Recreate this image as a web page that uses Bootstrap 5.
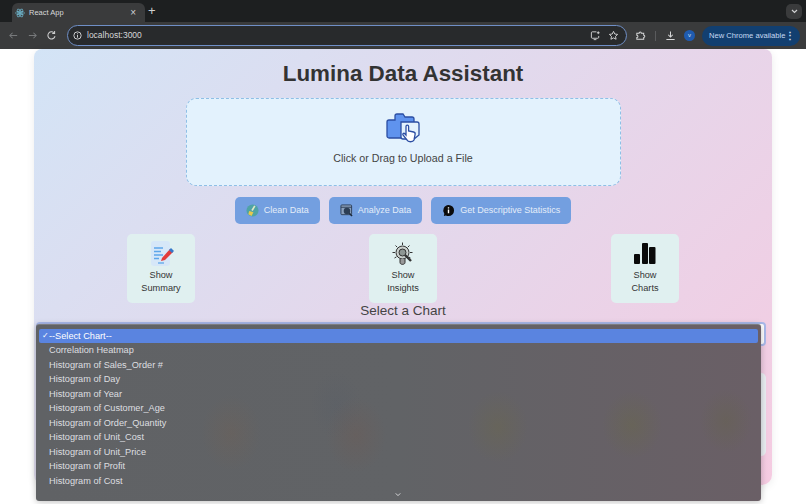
<!DOCTYPE html>
<html lang="en">
<head>
  <meta charset="UTF-8" />
  <meta name="viewport" content="width=device-width, initial-scale=1.0"/>
  <title>React App</title>
  <link href="https://cdn.jsdelivr.net/npm/bootstrap@5.3.0/dist/css/bootstrap.min.css" rel="stylesheet">
  <style>
    html, body { height: 504px; overflow: hidden; }
    body { background: #fff; font-family: "Liberation Sans", Arial, sans-serif; position: relative; }

    /* browser chrome */
    .tab-strip { height: 22px; background: #1d1f20; padding-left: 12px; padding-right: 4px; }
    .chrome-tab { width: 133px; height: 19px; margin-top: 3px; background: #3a3b3c; border-radius: 6px 6px 0 0; color: #d8d9da; font-size: 7.5px; padding: 0 9px 0 3px; }
    .tab-favicon { width: 10px; height: 10px; margin: 0 4px 0 0; }
    .tab-close, .tab-new { color: #d0d1d2; line-height: 1; }
    .tab-close { font-size: 10px; }
    .tab-new { font-size: 13px; margin-left: 3px; }
    .tab-menu { width: 16px; height: 15px; background: #3a3b3c; border-radius: 5px; }
    .tool-bar { height: 27px; background: #3a3b3c; padding: 0 4px 0 8px; }
    .tool-ico { width: 11px; height: 11px; flex: none; }
    .url-box { width: 560px; height: 21px; margin-left: 10px; background: #282a2c; border: 1.3px solid #6f8fc7; border-radius: 11px; padding: 0 7px 0 4px; color: #d6d7d8; font-size: 8.5px; }
    .cast-ico { margin-right: 7px; }
    .bar-sep { width: 1px; height: 10px; background: #5a5b5d; margin: 0 9px; }
    .avatar-dot { width: 11px; height: 11px; margin: 0 7px 0 8px; border-radius: 50%; background: #1f5bb0; color: #d7e4f7; font-size: 6px; line-height: 11px; text-align: center; }
    .update-pill { width: 98px; height: 20px; background: #123f70; border-radius: 10px; color: #c6daf3; font-size: 7.6px; padding: 0 5px 0 7px; white-space: nowrap; }
    .pill-dots { font-size: 10px; font-weight: 700; line-height: 1; }

    /* app */
    .app-panel { width: 738px; height: 436px; margin-left: 34px; padding: 6px 6px 0; border-radius: 8px 8px 10px 10px; background: linear-gradient(135deg, #d3e4f6, #f5cbe1); box-shadow: 0 2px 8px rgba(0,0,0,.08); }
    .app-title { font-size: 22.4px; font-weight: 700; color: #333; margin: 5px 0 0; line-height: 28px; height: 33px; text-align: center; }
    .drop-zone { width: 435px; height: 88px; margin: 5px auto 0; padding-bottom: 5px; background: #e3f2fd; border: 1px dashed #8fbfe6; border-radius: 10px; color: #444; font-size: 10.7px; }
    .drop-ico { width: 34px; height: 30px; margin-bottom: 7px; }
    .action-row { margin-top: 11px; gap: 9px; }
    .action-btn { height: 27px; padding: 0 11px; background: #739fe0; border: 0; border-radius: 5px; color: #e4edf9; font-size: 9px; }
    .action-btn:hover { background: #739fe0; color: #e4edf9; }
    .action-ico { width: 13px; height: 13px; margin-right: 5px; }
    .tile-row { margin-top: 10px; }
    .show-tile { width: 68px; height: 69px; padding: 7px 2px 0; background: #e0f0f0; border-radius: 5px; color: #333; font-size: 9.2px; line-height: 13.4px; text-align: center; }
    .tile-ico { width: 26px; height: 26px; margin-bottom: 2px; }
    .chart-label { font-size: 13.5px; color: #444; line-height: 16px; margin: 0; text-align: center; height: 19px; }
    .chart-select { height: 24px; width: 730px; margin-left: -4px; background-color: #fff; border: 2px solid #a9b9ea; border-radius: 4px; padding: 0; }
    .below-card { height: 83px; margin-top: 27px; background: #e9edf1; border-radius: 5px; }

    /* native select popup */
    .select-popup { position: absolute; left: 36px; top: 324px; width: 725px; height: 177px; padding: 3.500px 3px 0; border-radius: 3px; border-top: 1px solid #7d7d80; color: #dedfe0; font-size: 9.2px; box-shadow: 0 1px 6px rgba(0,0,0,.25);
      background:
        radial-gradient(ellipse 30px 38px at 195px 108px, rgba(125,95,70,.2), transparent),
        radial-gradient(ellipse 30px 38px at 320px 110px, rgba(120,85,70,.22), transparent),
        radial-gradient(ellipse 26px 34px at 300px 80px, rgba(80,90,105,.18), transparent),
        radial-gradient(ellipse 30px 36px at 462px 102px, rgba(110,105,65,.3), transparent),
        radial-gradient(ellipse 30px 34px at 596px 100px, rgba(105,105,65,.35), transparent),
        radial-gradient(ellipse 26px 32px at 690px 96px, rgba(100,100,65,.3), transparent),
        linear-gradient(90deg, #606265, #616366 50%, #6a5f66);
    }
    .popup-opt { height: 14.55px; line-height: 14.55px; padding-left: 10px; position: relative; white-space: nowrap; }
    .popup-opt.is-current { background: #5a84e0; border-radius: 2px; color: #fff; }
    .popup-tick { position: absolute; left: 3px; font-size: 8px; }
    .popup-more { position: absolute; left: 359px; bottom: 4px; width: 6px; height: 5px; }
  </style>
</head>
<body>
  <div class="tab-strip d-flex align-items-start">
    <div class="chrome-tab d-flex align-items-center">
      <svg class="tab-favicon" viewBox="0 0 20 20" fill="none" stroke="#6fb7cf" stroke-width="1.4"><circle cx="10" cy="10" r="2" fill="#6fb7cf"/><ellipse cx="10" cy="10" rx="9" ry="3.6"/><ellipse cx="10" cy="10" rx="9" ry="3.6" transform="rotate(60 10 10)"/><ellipse cx="10" cy="10" rx="9" ry="3.6" transform="rotate(120 10 10)"/></svg>
      <span class="flex-grow-1">React App</span>
      <span class="tab-close">×</span>
    </div>
    <span class="tab-new mt-1">+</span>
    <div class="tab-menu ms-auto mt-1 d-flex align-items-center justify-content-center">
      <svg width="7" height="5" viewBox="0 0 7 5" fill="none" stroke="#d0d1d2" stroke-width="1.2"><path d="M1 1l2.5 2.5L6 1"/></svg>
    </div>
  </div>

  <div class="tool-bar d-flex align-items-center">
    <svg class="tool-ico me-2" viewBox="0 0 12 12" fill="none" stroke="#77797b" stroke-width="1.1"><path d="M10 6H2M5 3L2 6l3 3"/></svg>
    <svg class="tool-ico me-2" viewBox="0 0 12 12" fill="none" stroke="#77797b" stroke-width="1.1"><path d="M2 6h8M7 3l3 3-3 3"/></svg>
    <svg class="tool-ico" viewBox="0 0 12 12" fill="none" stroke="#cfd0d1" stroke-width="1.1"><path d="M9.8 6.6A3.9 3.9 0 1 1 8.6 3M9.4 1.2v2.6H6.8"/></svg>
    <div class="url-box d-flex align-items-center">
      <svg class="tool-ico me-1" viewBox="0 0 12 12" fill="none" stroke="#d6d7d8" stroke-width="1"><circle cx="6" cy="6" r="4"/><path d="M6 5.4v3M6 3.6v1"/></svg>
      <span class="flex-grow-1">localhost:3000</span>
      <svg class="tool-ico cast-ico" viewBox="0 0 12 12" fill="none" stroke="#d6d7d8" stroke-width="1"><path d="M7 2H2.5A1 1 0 0 0 1.500 3v5a1 1 0 0 0 1 1h6a1 1 0 0 0 1-1V6.500M4 10.500h3M9 1.500v3M7.500 3h3"/></svg>
      <svg class="tool-ico" viewBox="0 0 12 12" fill="none" stroke="#d6d7d8" stroke-width="1"><path d="M6 1.500l1.400 2.900 3.100.4-2.300 2.200.6 3.100L6 8.600l-2.800 1.500.6-3.100-2.300-2.200 3.100-.4z"/></svg>
    </div>
    <svg class="tool-ico ms-2" viewBox="0 0 12 12" fill="none" stroke="#d6d7d8" stroke-width="1.100"><path d="M2 3.500h2.500a1.200 1.200 0 0 1 2.400 0H9.500v2.200a1.200 1.200 0 0 1 0 2.400v2H2V8.200a1.200 1.200 0 0 0 0-2.400z"/></svg>
    <span class="bar-sep"></span>
    <svg class="tool-ico" viewBox="0 0 12 12" fill="none" stroke="#d6d7d8" stroke-width="1.100"><path d="M6 1.500v6M3.500 5.200L6 7.700l2.500-2.500M1.500 10.300h9"/></svg>
    <span class="avatar-dot">v</span>
    <div class="update-pill d-flex align-items-center justify-content-between">
      <span>New Chrome available</span><span class="pill-dots">⋮</span>
    </div>
  </div>

  <div class="app-panel">
    <h1 class="app-title">Lumina Data Assistant</h1>

    <div class="drop-zone d-flex flex-column align-items-center justify-content-center">
      <svg class="drop-ico" viewBox="0 0 34 30">
        <path d="M1 9a2 2 0 0 1 2-2h6V3a2 2 0 0 1 2-2h6l2 3h7a2 2 0 0 1 2 2v17a2 2 0 0 1-2 2H3a2 2 0 0 1-2-2z" fill="#5f93ee" stroke="#2b4ea3" stroke-width="1.300"/>
        <path d="M15 9h16a2 2 0 0 1 2 2v11l-5 4H17a2 2 0 0 1-2-2z" fill="#e3f2fd" stroke="#2b4ea3" stroke-width="1.300"/>
        <path d="M21 27l-4-5c-.8-1.300.8-2.400 1.800-1.300l1.200 1.300V13.500c0-1.800 2.600-1.800 2.600 0V18l5 1c1.200.3 1.700 1.300 1.500 2.400L28 27c-1 2.300-6 2.300-7 0z" fill="#fff" stroke="#2b4ea3" stroke-width="1.300"/>
      </svg>
      <span>Click or Drag to Upload a File</span>
    </div>

    <div class="action-row d-flex justify-content-center">
      <button class="btn action-btn d-flex align-items-center">
        <svg class="action-ico" viewBox="0 0 14 14"><circle cx="7" cy="7" r="6.500" fill="#4fa3a5"/><path d="M9.500 2L6.500 7" stroke="#dfe8c8" stroke-width="1.800"/><path d="M3.500 7.500l4.500 1.500-2 4-3.500-2z" fill="#e6c84f"/></svg>
        Clean Data
      </button>
      <button class="btn action-btn d-flex align-items-center">
        <svg class="action-ico" viewBox="0 0 14 14"><rect x="1" y="1" width="11.500" height="10.500" rx="1" fill="#8aa0bd" stroke="#2c3e55"/><path d="M1 3.500h11.500" stroke="#2c3e55"/><circle cx="7.500" cy="7.500" r="3.500" fill="#2c3e55"/><path d="M10 10l3 3" stroke="#1d2a3b" stroke-width="1.600"/></svg>
        Analyze Data
      </button>
      <button class="btn action-btn d-flex align-items-center">
        <svg class="action-ico" viewBox="0 0 14 14"><path d="M7 1a6 6 0 0 1 0 12c-1 0-2-.2-2.800-.700L2 13l.5-2.400A6 6 0 0 1 7 1z" fill="#0b0b0b"/><path d="M7 6v4M7 3.600v1.200" stroke="#fff" stroke-width="1.500"/></svg>
        Get Descriptive Statistics
      </button>
    </div>

    <div class="tile-row d-flex justify-content-around">
      <div class="show-tile">
        <svg class="tile-ico d-block mx-auto" viewBox="0 0 26 26">
          <rect x="3" y="0" width="19" height="25" rx="3" fill="#d6e7f8"/>
          <path d="M6 7h9M6 10.500h7M6 14h9M6 17.500h5" stroke="#5ea6ea" stroke-width="1.300"/>
          <path d="M10 22h6" stroke="#5ea6ea" stroke-width="1.300"/>
          <path d="M14 17l8-9 3 3-8 8-4 1z" fill="#e23b3b"/><path d="M21 9l2-2 3 3-2 2z" fill="#3578c9"/>
        </svg>
        Show<br>Summary
      </div>
      <div class="show-tile">
        <svg class="tile-ico d-block mx-auto" viewBox="0 0 26 26" fill="none" stroke="#333" stroke-width="1">
          <circle cx="12.500" cy="11.500" r="6.500" fill="#c9cfcc"/>
          <circle cx="12.500" cy="11.500" r="3.500" fill="#8e9693"/>
          <path d="M10 18v3.500c0 2.500 5 2.500 5 0V18" fill="#999"/>
          <path d="M12.500 1.500v2.500M5.500 4.500l1.700 1.700M19.500 4.500l-1.700 1.700M2.500 11.500H5M20 11.500h2.500M4.500 17l2-1.200M20.500 17l-2-1.200"/>
          <path d="M15 14l6 6" stroke-width="2.400"/>
        </svg>
        Show<br>Insights
      </div>
      <div class="show-tile">
        <svg class="tile-ico d-block mx-auto" viewBox="0 0 26 26" fill="#0a0a0a">
          <rect x="2" y="13" width="6" height="10" rx="1"/>
          <rect x="10" y="2" width="6" height="21" rx="1"/>
          <rect x="17" y="6" width="6.500" height="17" rx="1"/>
        </svg>
        Show<br>Charts
      </div>
    </div>

    <p class="chart-label">Select a Chart</p>
    <select class="form-select chart-select" aria-label="Select a Chart"></select>
    <div class="below-card"></div>
  </div>

  <div class="select-popup">
    <div id="popupOptions"></div>
    <svg class="popup-more" viewBox="0 0 8 6" fill="none" stroke="#e4e4e5" stroke-width="1.200"><path d="M1 1.500l3 3 3-3"/></svg>
  </div>

  <script>
    const opciones = ['--Select Chart--', 'Correlation Heatmap', 'Histogram of Sales_Order #', 'Histogram of Day',
      'Histogram of Year', 'Histogram of Customer_Age', 'Histogram of Order_Quantity', 'Histogram of Unit_Cost',
      'Histogram of Unit_Price', 'Histogram of Profit', 'Histogram of Cost'];
    const popup = document.getElementById('popupOptions');
    opciones.forEach((texto, i) => {
      const row = document.createElement('div');
      row.className = 'popup-opt' + (i === 0 ? ' is-current' : '');
      row.innerHTML = (i === 0 ? '<span class="popup-tick">✓</span>' : '') + texto;
      popup.appendChild(row);
    });
  </script>
  <script src="https://cdn.jsdelivr.net/npm/bootstrap@5.3.0/dist/js/bootstrap.bundle.min.js"></script>
</body>
</html>
